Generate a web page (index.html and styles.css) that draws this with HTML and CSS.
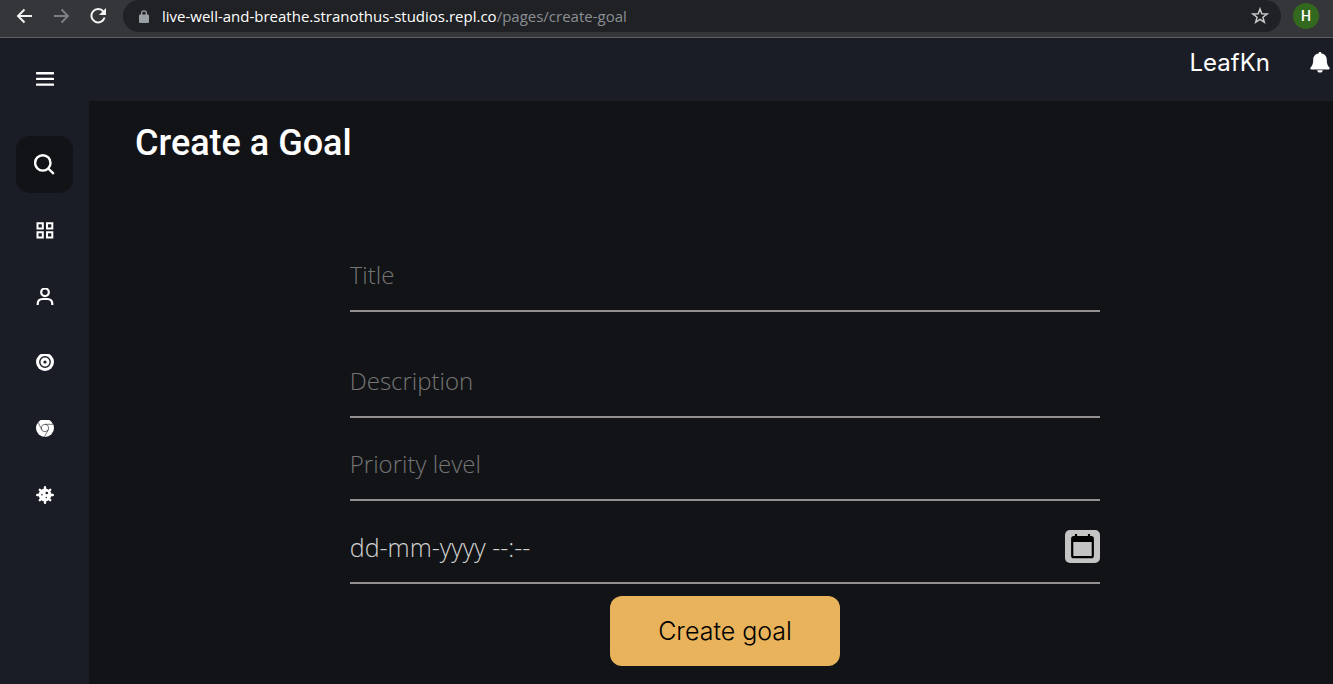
FILE: index.html
```html
<!DOCTYPE html>
<html lang="en">
<head>
<meta charset="utf-8">
<title>Create a Goal</title>
<link rel="stylesheet" href="styles.css">
</head>
<body>
<div class="browser">
  <button class="tool" aria-label="Back"><svg width="18" height="18" viewBox="0 0 18 18" fill="none" stroke="#f1f3f4" stroke-width="2"><path d="M16 9H2M8.500 2.500 2 9l6.500 6.500"/></svg></button>
  <button class="tool" aria-label="Forward"><svg width="18" height="18" viewBox="0 0 18 18" fill="none" stroke="#7d7e82" stroke-width="2"><path d="M1 9h14M8.500 2.500 15 9l-6.500 6.500"/></svg></button>
  <button class="tool" aria-label="Reload"><svg width="18" height="18" viewBox="0 0 18 18"><path d="M13.500 4.700A6.700 6.700 0 1 0 14.600 10.500" fill="none" stroke="#f1f3f4" stroke-width="2"/><path d="M16 1v7H9z" fill="#f1f3f4"/></svg></button>
  <div class="address">
    <svg width="10" height="13" viewBox="0 0 10 13"><rect y="4.500" width="10" height="8.500" rx="1.200" fill="#9aa0a6"/><path d="M2.600 5V3.200a2.400 2.400 0 0 1 4.800 0V5" fill="none" stroke="#9aa0a6" stroke-width="1.300"/></svg>
    <span class="url">live-well-and-breathe.stranothus-studios.repl.co<span class="path">/pages/create-goal</span></span>
    <button class="tool" aria-label="Bookmark"><svg width="18" height="18" viewBox="0 0 18 18" fill="none" stroke="#c6c8ca" stroke-width="1.500"><path d="m9 1.900 1.800 4.900 5.200.2-4.100 3.200 1.400 5L9 12.300l-4.300 2.900 1.400-5L2 7l5.200-.2z"/></svg></button>
  </div>
  <button class="avatar" aria-label="Profile">H</button>
</div>
<div class="app">
  <nav class="sidebar" aria-label="Main">
    <button class="menu" aria-label="Menu"><svg width="18" height="14" viewBox="0 0 18 14" fill="#fff"><rect width="18" height="2.400" rx=".6"/><rect y="5.700" width="18" height="2.400" rx=".6"/><rect y="11.400" width="18" height="2.400" rx=".6"/></svg></button>
    <a class="item active" href="#search" aria-label="Search"><svg width="22" height="22" viewBox="0 0 22 22" fill="none" stroke="#fff" stroke-width="2.400"><circle cx="8.800" cy="8.900" r="7.700"/><path d="m14.200 14.500 5.600 5.300"/></svg></a>
    <a class="item" href="#dashboard" aria-label="Dashboard"><svg width="18" height="18" viewBox="0 0 18 18" fill="none" stroke="#fff" stroke-width="2"><path d="M1.500 1.200h5.300v5.300H1.500zM11 1.200h5.300v5.300H11zM1.500 10.300h5.300v5.300H1.500zM11 10.300h5.300v5.300H11z"/></svg></a>
    <a class="item" href="#profile" aria-label="Profile"><svg width="18" height="18" viewBox="0 0 18 18" fill="none" stroke="#fff" stroke-width="2.200"><circle cx="9" cy="4.300" r="3.800"/><path d="M1.700 17v-1q0-5 5-5h4.600q5 0 5 5v1"/></svg></a>
    <a class="item" href="#goals" aria-label="Goals"><svg width="18" height="18" viewBox="0 1 18 18"><circle cx="9" cy="9" r="9" fill="#fff"/><circle cx="9" cy="9" r="5.200" fill="none" stroke="#1a1d25" stroke-width="1.400"/><circle cx="9" cy="9" r="1.600" fill="#1a1d25"/></svg></a>
    <a class="item" href="#browser" aria-label="Browser"><svg width="18" height="18" viewBox="0 1 18 18"><circle cx="9" cy="9" r="9" fill="#fff"/><g fill="none" stroke="#1a1d25" stroke-width=".6"><circle cx="9" cy="9" r="3.700"/><path d="M9 5.300h8.200M5.700 10.700 2.200 3.600M12.300 10.700 8.300 18"/></g></svg></a>
    <a class="item" href="#health" aria-label="Health"><svg width="18" height="18" viewBox="0 0 18 18"><circle cx="9" cy="9" r="6.400" fill="#fff"/><path d="M9 1.200v15.600M1.200 9h15.600M3.800 3.800l10.400 10.400M14.200 3.800 3.800 14.200" stroke="#fff" stroke-width="2.400" stroke-linecap="round"/><circle cx="10.800" cy="7" r="1.300" fill="#1a1d25"/><circle cx="6" cy="8.800" r=".8" fill="#1a1d25"/><circle cx="10.300" cy="11.500" r=".7" fill="#1a1d25"/></svg></a>
  </nav>
  <div class="page">
    <header class="topbar">
      <span class="user">LeafKn</span>
      <button class="tool" aria-label="Notifications"><svg width="20" height="22" viewBox="0 0 20 22" fill="#fff"><path d="M10 0c.9 0 1.500.6 1.500 1.500 3.700.7 5.300 3.200 5.300 6.300 0 4.700 1.200 6.200 2.700 7.900.5.600.2 1.700-.8 1.700H1.300c-1 0-1.300-1.100-.8-1.700 1.500-1.700 2.700-3.200 2.700-7.900 0-3.100 1.600-5.600 5.300-6.300C8.500.6 9.100 0 10 0z"/><path d="M7.300 18.200h5.400a2.700 2.300 0 0 1-5.400 0z"/></svg></button>
    </header>
    <main class="content">
      <h1>Create a Goal</h1>
      <form class="goal">
        <input class="field spaced" type="text" placeholder="Title" aria-label="Title">
        <input class="field" type="text" placeholder="Description" aria-label="Description">
        <input class="field" type="text" placeholder="Priority level" aria-label="Priority level">
        <div class="field date">
          <input type="text" placeholder="dd-mm-yyyy --:--" aria-label="Due date and time">
          <button class="calendar" type="button" aria-label="Open calendar"><svg width="23" height="25" viewBox="0 0 23 25"><path d="M5 0v4M18 0v4" stroke="#000" stroke-width="2.200"/><rect x="1.200" y="3.200" width="20.600" height="20" rx="1.500" fill="none" stroke="#000" stroke-width="2.200"/><path d="M1 3h21v5H1z"/></svg></button>
        </div>
        <button class="submit" type="button">Create goal</button>
      </form>
    </main>
  </div>
</div>
</body>
</html>
```
FILE: styles.css
```css
* { box-sizing: border-box; }
body {
  margin: 0;
  min-height: 100vh;
  display: flex;
  flex-direction: column;
  background: #121316;
  color: #fff;
  font-family: "Open Sans", sans-serif;
}
button { border: 0; padding: 0; background: none; color: inherit; cursor: pointer; }
svg { display: block; flex: none; }

.browser {
  display: flex;
  align-items: center;
  height: 38px;
  padding: 0 14px 5px 16px;
  background: #35363a;
  border-bottom: 1px solid #5d5f63;
}
.tool { flex: none; }
.browser > .tool { margin-right: 19px; }
.address {
  flex: 1;
  display: flex;
  align-items: center;
  height: 32px;
  margin: 0 12px 0 -4px;
  padding: 0 12px 0 16px;
  border-radius: 16px;
  background: #202124;
}
.url {
  flex: 1;
  margin-left: 13px;
  font: 15px/24px "Open Sans", sans-serif;
  white-space: nowrap;
}
.path { color: #8b8f94; }
.avatar {
  width: 26px;
  height: 26px;
  border-radius: 50%;
  background: #33691e;
  font: 500 14px/26px Roboto, sans-serif;
}

.app { flex: 1; display: flex; }
.sidebar {
  flex: none;
  width: 89px;
  display: flex;
  flex-direction: column;
  align-items: center;
  gap: 9px;
  background: #1a1d25;
}
.menu {
  display: grid;
  place-items: center;
  width: 57px;
  height: 81px;
  margin-bottom: 8px;
}
.item {
  display: grid;
  place-items: center;
  width: 57px;
  height: 57px;
  border-radius: 14px;
}
.active { background: #121316; }

.page { flex: 1; min-width: 0; }
.topbar {
  display: flex;
  justify-content: flex-end;
  align-items: center;
  gap: 40px;
  height: 63px;
  padding: 0 3px 13px;
  background: #1a1d25;
}
.user { font: 24px/32px Inter, sans-serif; }
.content { padding: 18px 18px 16px 46px; }
h1 {
  margin: 0;
  font: 500 36px/48px Roboto, sans-serif;
}
.goal {
  display: flex;
  flex-direction: column;
  gap: 12px;
  width: 63.6%;
  margin: 74px auto 0;
}
.field {
  width: 100%;
  height: 71px;
  padding: 0 0 2px;
  border: 0;
  border-bottom: 2px solid #929090;
  border-radius: 0;
  outline: 0;
  background: none;
  color: #d0d0d0;
  font: 300 24px/32px "Open Sans", sans-serif;
}
.field::placeholder { color: #757575; opacity: 1; }
.spaced { margin-bottom: 23px; }
.date { display: flex; align-items: center; font-size: 25px; }
.date input {
  flex: 1;
  min-width: 0;
  padding: 0;
  border: 0;
  outline: 0;
  background: none;
  color: inherit;
  font: inherit;
}
.date input::placeholder { color: #d0d0d0; opacity: 1; }
.calendar {
  display: grid;
  place-items: center;
  width: 35px;
  height: 33px;
  border-radius: 5px;
  background: #c4c4c4;
}
.submit {
  align-self: center;
  padding: 19px 48px;
  border-radius: 12px;
  background: #e8b35a;
  color: #000;
  font: 300 25px/32px Inter, sans-serif;
}
```
